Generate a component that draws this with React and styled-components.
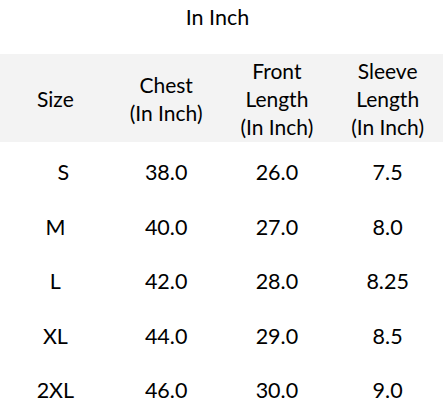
import React from "react";
import styled, { createGlobalStyle } from "styled-components";

const GlobalStyle = createGlobalStyle`
    body {
        margin: 0;
        background: #ffffff;
        font-family: Lato, "Open Sans", sans-serif;
        color: #000000;
    }
`

const Page = styled.div`
    width: 445px;
    height: 418px;
    overflow: hidden;
`

const Title = styled.h1`
    margin: 0;
    width: 443px;
    padding-right: 8px;
    box-sizing: border-box;
    height: 54px;
    padding-top: 3px;
    font-size: 21.5px;
    font-weight: 400;
    line-height: 28px;
    text-align: center;
`

// header band
const HeadRow = styled.div`
    display: grid;
    grid-template-columns: repeat(4, 1fr);
    width: 443px;
    height: 88px;
    background: #f3f3f3;
    align-items: center;
`

const HeadCell = styled.div`
    text-align: center;
    font-size: 21px;
    line-height: 28px;
    white-space: pre-line;
    padding-top: 2px;
`

const Row = styled.div`
    display: grid;
    grid-template-columns: repeat(4, 1fr);
    width: 443px;
    height: 54.5px;
    align-items: center;
`

const Cell = styled.div`
    text-align: center;
    font-size: 21.5px;
    line-height: 28px;
    padding-left: ${props => props.$shift || 0}px;
`

const Body = styled.div`
    padding-top: 3px;
`

const headers = ["Size", "Chest\n(In Inch)", "Front\nLength\n(In Inch)", "Sleeve\nLength\n(In Inch)"]

const rows = [
    ["S", "38.0", "26.0", "7.5"],
    ["M", "40.0", "27.0", "8.0"],
    ["L", "42.0", "28.0", "8.25"],
    ["XL", "44.0", "29.0", "8.5"],
    ["2XL", "46.0", "30.0", "9.0"],
]

function App() {
    return (
        <Page>
            <GlobalStyle />
            <Title>In Inch</Title>
            <HeadRow>
                {headers.map((h, index) => (
                    <HeadCell key={index}>{h}</HeadCell>
                ))}
            </HeadRow>
            <Body>
                {rows.map((row, index) => (
                    <Row key={index}>
                        {row.map((value, i) => (
                            <Cell key={i} $shift={i === 0 && value === "S" ? 16 : 0}>{value}</Cell>
                        ))}
                    </Row>
                ))}
            </Body>
        </Page>
    )
}

export default App
